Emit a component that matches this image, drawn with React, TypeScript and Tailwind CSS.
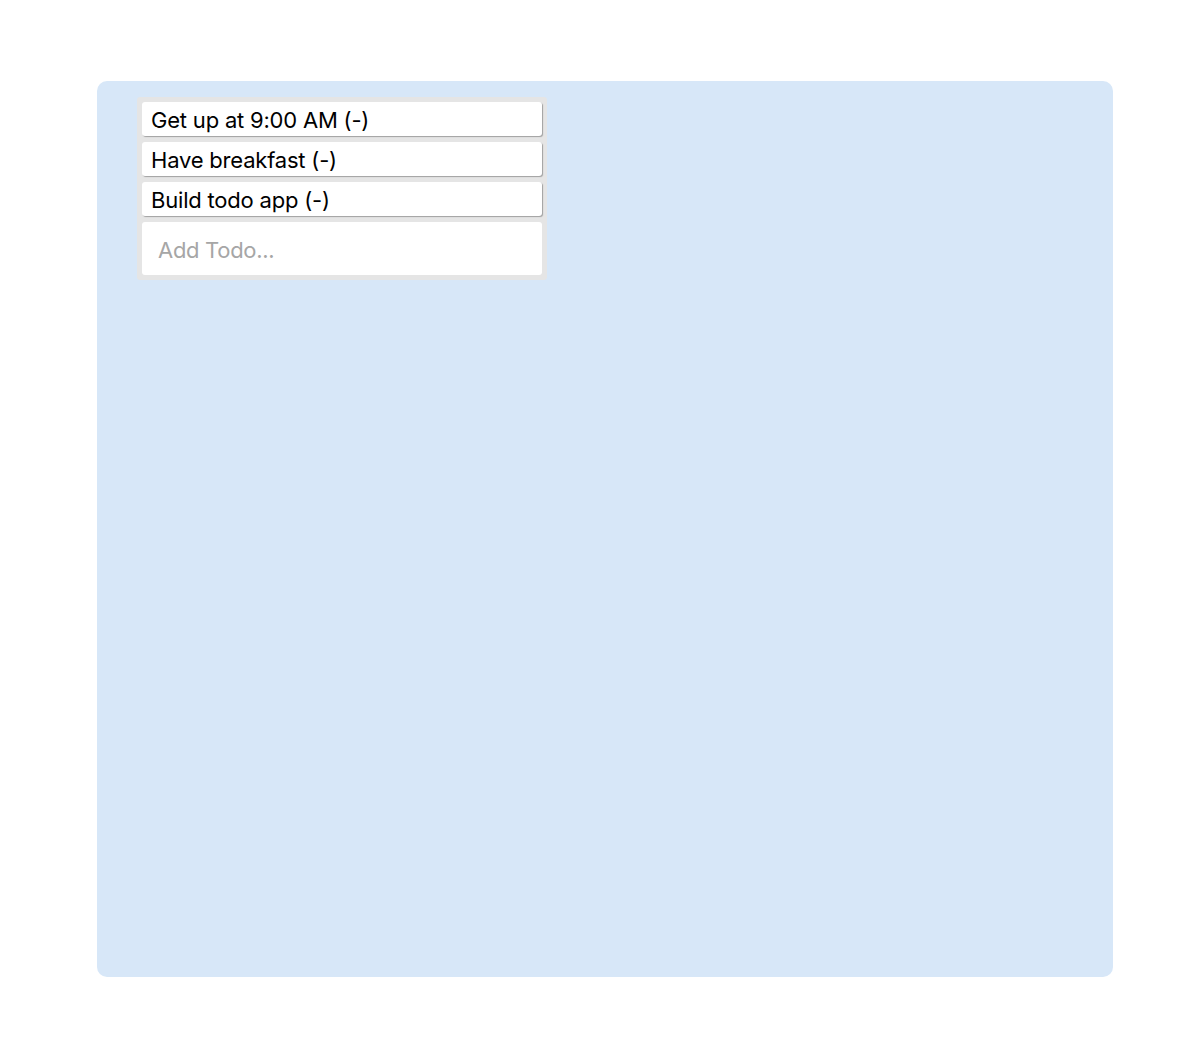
const todos = ["Get up at 9:00 AM", "Have breakfast", "Build todo app"]

const App = () => {
  return (
    <div className="min-h-[1043px] bg-white pt-[81px] pl-[97px]" style={{ fontFamily: "Inter, 'Liberation Sans', sans-serif" }}>
      <div className="w-[1016px] h-[896px] rounded-[10px] bg-[#d7e7f8] pt-[16px] pl-[40px]">
        <div className="w-[410px] rounded-[3px] bg-[#e5e5e5] p-[5px] flex flex-col gap-[6px]">
          {todos.map((todo) => (
            <div
              key={todo}
              className="h-[34px] flex items-center pl-[9px] pt-[2px] bg-white rounded-[3px] shadow-[1px_1px_1px_rgba(0,0,0,0.3)] text-[22px] tracking-[-0.2px] text-black leading-none"
            >
              {todo} (-)
            </div>
          ))}
          <input
            className="h-[53px] w-full bg-white rounded-[3px] px-[16px] pt-[2px] text-[22px] tracking-[-0.3px] text-black placeholder:text-[#a6a6a6] outline-none"
            placeholder="Add Todo..."
          />
        </div>
      </div>
    </div>
  )
}

export default App
